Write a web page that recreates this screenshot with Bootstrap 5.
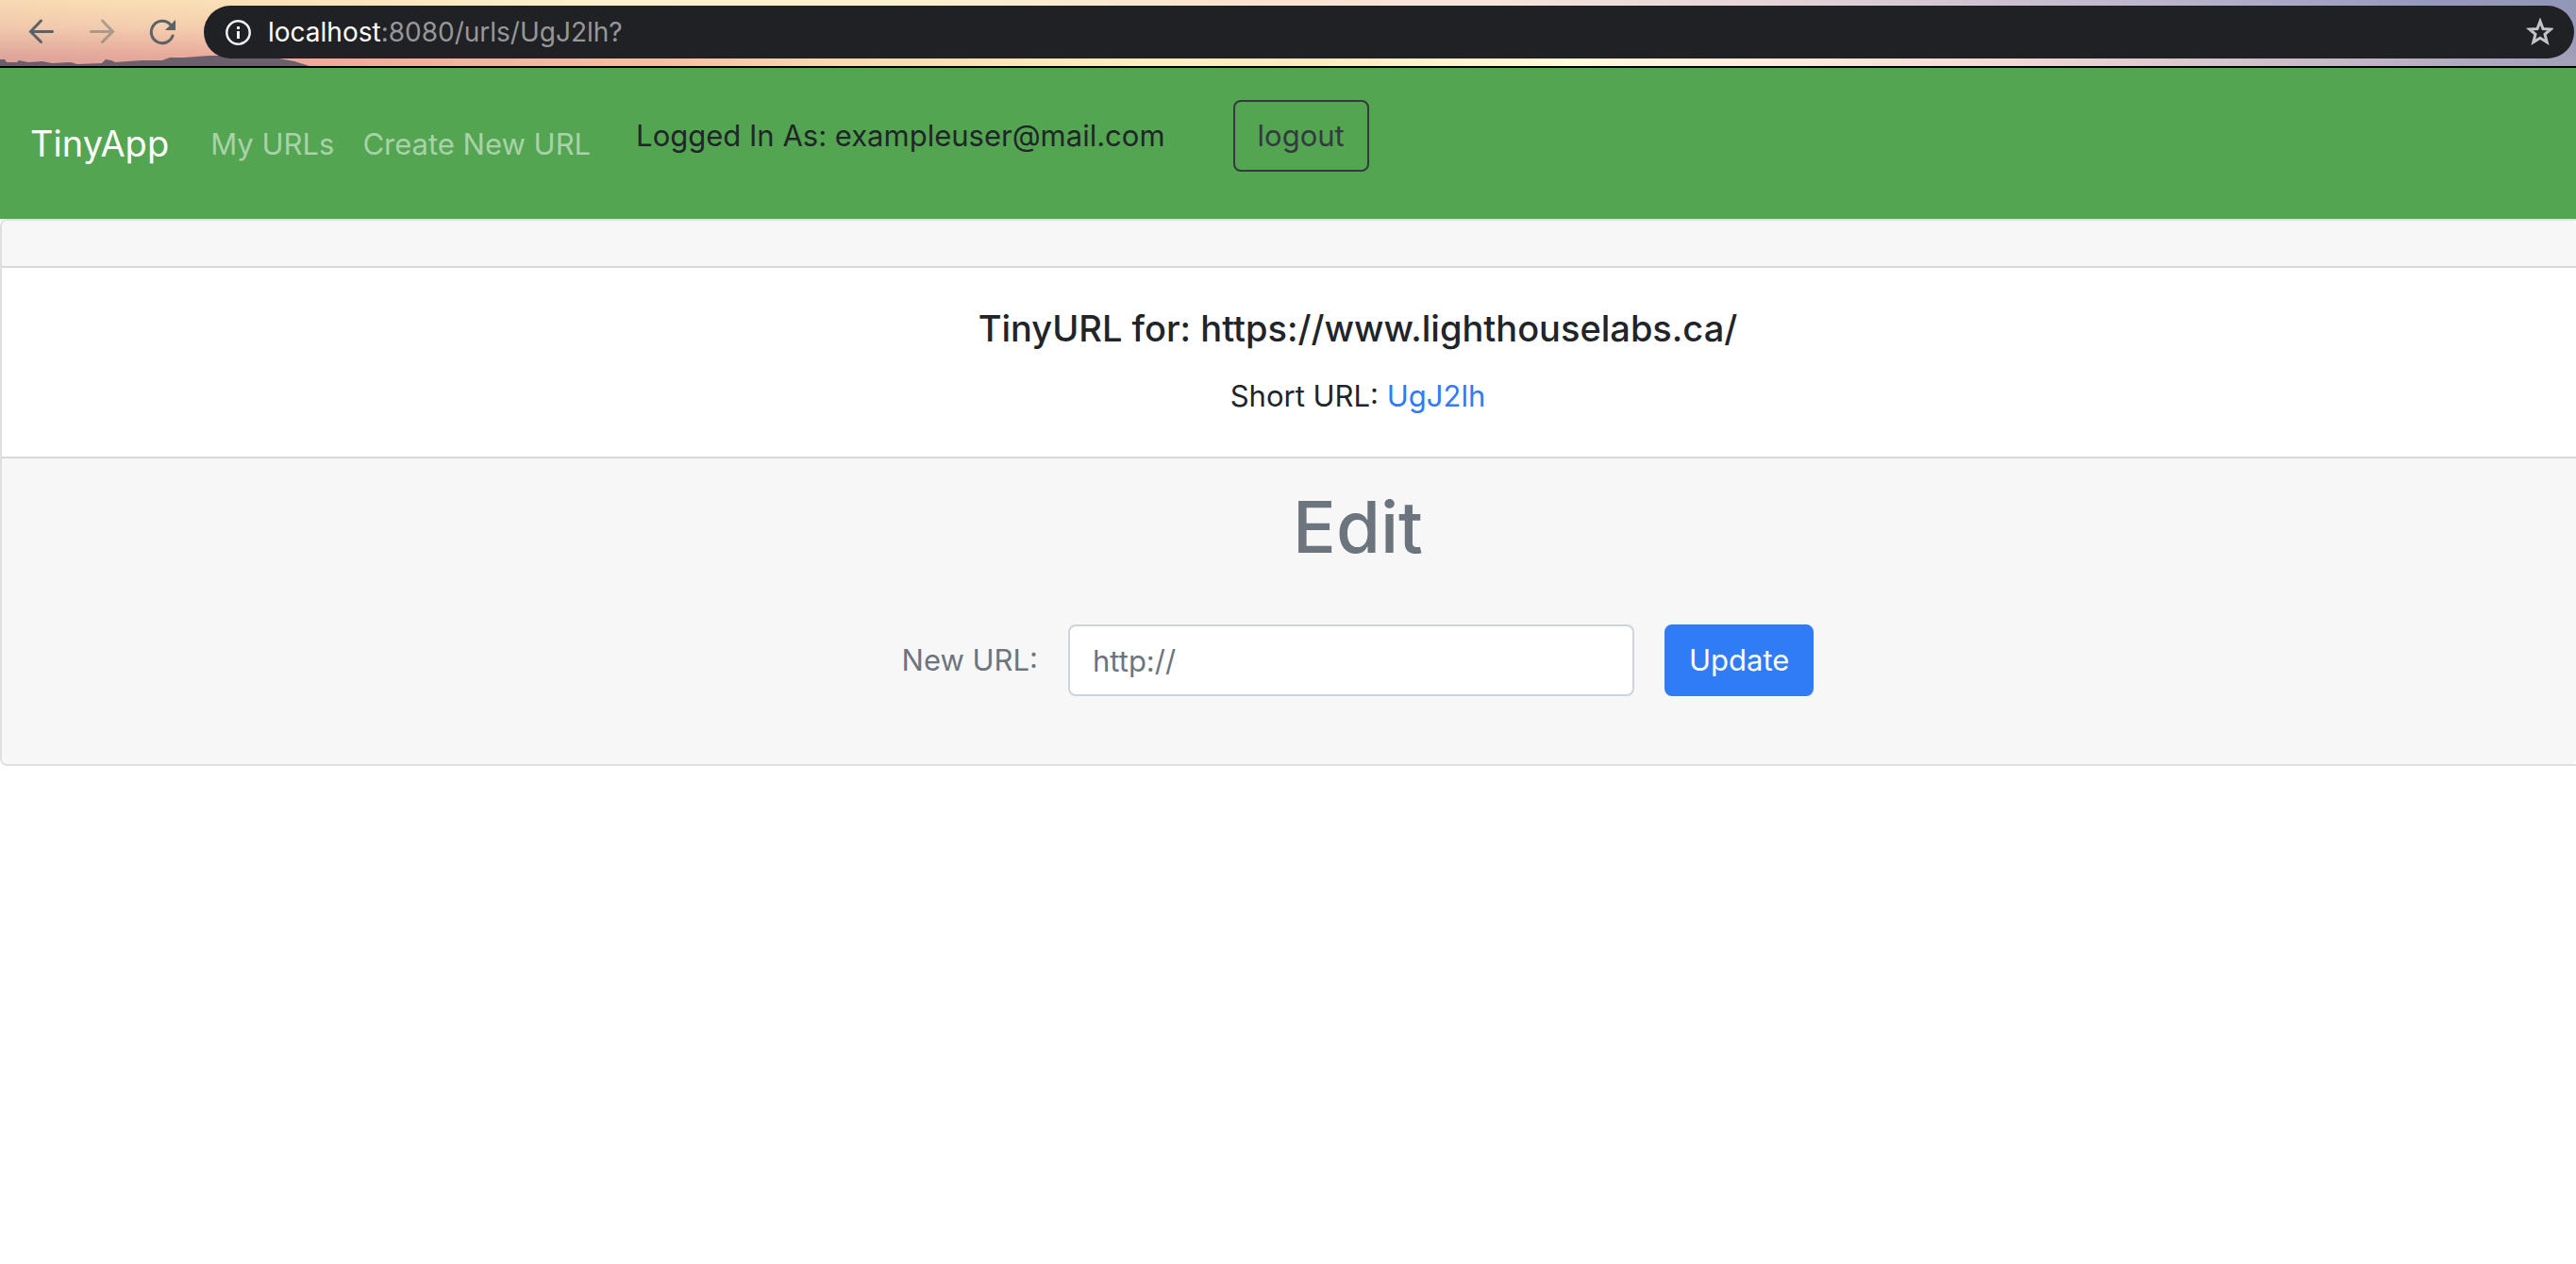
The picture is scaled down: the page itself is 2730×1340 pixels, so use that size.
<!DOCTYPE html>
<html lang="en">
<head>
<meta charset="utf-8">
<meta name="viewport" content="width=device-width, initial-scale=1">
<title>TinyApp</title>
<link href="https://cdn.jsdelivr.net/npm/bootstrap@5.3.0/dist/css/bootstrap.min.css" rel="stylesheet">
<style>
  body { font-family: Inter, "Liberation Sans", sans-serif; font-size: 31px; line-height: 48px; color: #212529; }

  /* browser toolbar: sunset sky, warm near the horizon and paler above */
  .toolbar { position: relative; height: 72px; border-bottom: 2px solid #000; padding: 6px 2px 8px 26px;
    background: linear-gradient(90deg, #dda39b 0, #eba899 10%, #f7c0a2 26%, #f9d8ae 32%, #fdf0c0 45%, #fcebbd 50%, #fffbdc 61%, #fdeadc 70%, #f3d8d4 78%, #d2c3cc 87%, #a29fb9 100%); }
  .toolbar::before { content: ""; position: absolute; inset: 0;
    background: linear-gradient(90deg, #f9d9b3 0, #fae2b8 10%, #fdf1cb 22%, #fcf1d0 35%, #fbe2d0 48%, #f8e3da 58%, #e2d0d6 70%, #b7b1ca 85%, #9698bc 94%, #9096b6 100%);
    -webkit-mask-image: linear-gradient(180deg, #000 0, rgba(0,0,0,.7) 40%, transparent 90%);
    mask-image: linear-gradient(180deg, #000 0, rgba(0,0,0,.7) 40%, transparent 90%); }
  .toolbar .hills { position: absolute; left: 0; bottom: 0; }
  .toolbar .tool { position: relative; width: 36px; height: 36px; padding: 0; border: 0; background: none; color: #5b6267; display: flex; margin-right: 28px; }
  .toolbar .tool:disabled { opacity: .45; }
  .address { position: relative; height: 56px; border-radius: 28px; background: #202124; color: #969798; margin-left: -2px; padding: 0 22px; gap: 18px; }
  .address .url { font-size: 28px; line-height: 56px; }

  /* site navbar */
  .site-nav { background: #53a551; height: 160px; padding: 16px 32px; }
  .site-nav .navbar-brand { font-size: 38px; line-height: 60px; color: #fff; margin-right: 28px; padding: 10px 0; }
  .site-nav .nav-link { color: rgba(255,255,255,.5); padding: 18px 16px 16px !important; }
  .site-nav .nav-link + .nav-link { padding-left: 14px !important; }
  .site-nav .logout { margin-left: 72px; }
  .logout .btn { --bs-btn-color: #343a40; --bs-btn-border-color: #343a40; }
  .btn-tall { font-size: 31px; line-height: 48px; padding: 12px 24px; border-width: 2px; border-radius: 8px; }

  /* url card */
  .url-card { border: 2px solid #dfdfdf; border-right: 0; border-radius: 8px 0 0 8px; --bs-card-cap-bg: #f7f7f7; }
  .url-card .card-header { height: 50px; border-bottom: 2px solid #d8d8d8; }
  .url-card .card-body { padding: 40px 40px 16px 186px; }
  .url-card .card-title { font-size: 38px; line-height: 48px; margin-bottom: 24px; }
  .url-card .card-body p { margin-bottom: 24px; }
  .url-card a { color: #2f7cf6; text-decoration: none; }
  .url-card .card-footer { border-top: 2px solid #d8d8d8; padding: 24px 40px 72px 186px; color: #6c757d; }
  .url-card h1 { font-size: 76px; line-height: 96px; margin-bottom: 56px; }
  .url-card .form-control { width: 600px; height: 76px; font-size: 31px; border: 2px solid #ced4da; border-radius: 8px; padding: 12px 24px; }
  .url-card .form-control::placeholder { color: #6c757d; }
  .url-card .btn { --bs-btn-bg: #2f7cf6; --bs-btn-border-color: #2f7cf6; }
</style>
</head>
<body>
<header class="toolbar d-flex align-items-center">
  <svg class="hills" width="340" height="12" viewBox="0 0 340 12" aria-hidden="true"><path d="M0 12V5L5 5L7 8L18 8L20 6L30 8L45 7L55 9L75 8L82 10L108 9L112 5L118 6L122 8L150 6L172 6L180 3L195 3L222 1L245 1L262 4L296 4L312 7L328 12Z" fill="#5d5768" opacity=".9"/></svg>
  <button class="tool" type="button" aria-label="Back"><svg width="36" height="36" viewBox="0 0 36 36" fill="none" stroke="currentColor" stroke-width="3" stroke-linecap="round"><path d="M29.500 17.500H6.500M17.500 6L6.500 17.500L17.500 28.500"/></svg></button>
  <button class="tool" type="button" aria-label="Forward" disabled><svg width="36" height="36" viewBox="0 0 36 36" fill="none" stroke="currentColor" stroke-width="3" stroke-linecap="round"><path d="M6.500 17.500H29.500M18.500 6L29.500 17.500L18.500 28.500"/></svg></button>
  <button class="tool" type="button" aria-label="Reload"><svg width="36" height="36" viewBox="0 0 36 36" fill="none" stroke="currentColor" stroke-width="3" stroke-linecap="round"><path d="M29 22A11.700 11.700 0 1 1 26.500 10"/><path d="M32 5V16H21Z" fill="currentColor" stroke="none"/></svg></button>
  <div class="address d-flex align-items-center flex-grow-1">
    <svg width="28" height="28" viewBox="0 0 28 28" fill="none" stroke="#f1f1f1" stroke-width="2.500"><circle cx="14.500" cy="14.500" r="12.200"/><path stroke-width="3" d="M14.500 13V21M14.500 8V11"/></svg>
    <span class="url flex-grow-1"><span class="text-white">localhost</span>:8080/urls/UgJ2lh?</span>
    <svg width="30" height="30" viewBox="0 0 30 30" fill="none" stroke="#c4c4c4" stroke-width="3"><path d="M16 3.500L19 11.500L27.300 12L21 17.400L23.200 25.800L16 21.300L8.800 25.800L11 17.400L4.700 12L13 11.500Z"/></svg>
  </div>
</header>

<nav class="site-nav navbar navbar-expand justify-content-start">
  <a class="navbar-brand" href="#">TinyApp</a>
  <div class="navbar-nav">
    <a class="nav-link" href="#">My URLs</a>
    <a class="nav-link" href="#">Create New URL</a>
  </div>
  <form class="d-flex align-items-center mb-3 ms-3 ps-3">
    <span>Logged In As: exampleuser@mail.com</span>
    <div class="logout"><button class="btn btn-outline-dark btn-tall" type="button">logout</button></div>
  </form>
</nav>

<main class="url-card card text-center">
  <div class="card-header"></div>
  <div class="card-body">
    <h5 class="card-title">TinyURL for: https://www.lighthouselabs.ca/</h5>
    <p>Short URL: <a href="#">UgJ2lh</a></p>
  </div>
  <div class="card-footer">
    <h1>Edit</h1>
    <form class="d-flex justify-content-center align-items-center">
      <label for="longURL" class="me-3 pe-3">New URL:</label>
      <input id="longURL" class="form-control me-3" type="text" placeholder="http://">
      <button class="btn btn-primary btn-tall ms-3" type="button">Update</button>
    </form>
  </div>
</main>
<script src="https://cdn.jsdelivr.net/npm/bootstrap@5.3.0/dist/js/bootstrap.bundle.min.js"></script>
</body>
</html>
